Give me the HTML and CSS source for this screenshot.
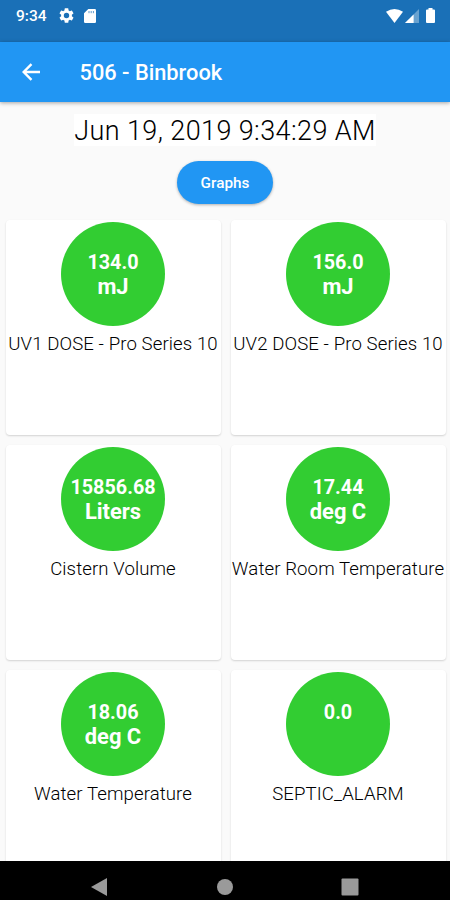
FILE: index.html
```html
<!DOCTYPE html>
<html lang="en">
<head>
<meta charset="utf-8">
<title>506 - Binbrook</title>
<link rel="stylesheet" href="styles.css">
</head>
<body>
<div class="screen">
  <header class="status">
    <span class="clock">9:34</span>
    <svg class="gear" viewBox="2 2 20 20"><path d="M19.14 12.94c.04-.3.06-.61.06-.94s-.02-.64-.07-.94l2.03-1.58a.49.49 0 0 0 .12-.61l-1.92-3.32a.49.49 0 0 0-.59-.22l-2.39.96a7 7 0 0 0-1.62-.94l-.36-2.54a.48.48 0 0 0-.48-.41h-3.84a.48.48 0 0 0-.47.41l-.36 2.54a7.3 7.3 0 0 0-1.62.94l-2.39-.96a.48.48 0 0 0-.59.22L2.74 8.87a.48.48 0 0 0 .12.61l2.03 1.58a6 6 0 0 0 0 1.88l-2.03 1.58a.49.49 0 0 0-.12.61l1.92 3.32c.12.22.37.29.59.22l2.39-.96c.5.38 1.03.7 1.62.94l.36 2.54c.05.24.24.41.48.41h3.84c.24 0 .44-.17.47-.41l.36-2.54a7.3 7.3 0 0 0 1.62-.94l2.39.96c.22.08.47 0 .59-.22l1.92-3.32a.48.48 0 0 0-.12-.61zM12 15.6a3.6 3.6 0 1 1 0-7.2 3.6 3.6 0 0 1 0 7.2z"/></svg>
    <svg class="sd" viewBox="0 0 12 14"><path d="M4.3 0H10.8Q12 0 12 1.200V12.800Q12 14 10.800 14H1.200Q0 14 0 12.800V4.300Z"/><path class="slots" d="M5 2v2.200M7.200 2v2.200M9.400 2v2.200"/></svg>
    <svg class="wifi" viewBox="0 0 17 14"><path d="M0 2.700Q8.500-2.700 17 2.700L8.500 14Z"/></svg>
    <svg class="signal" viewBox="0 0 14 14"><path class="faint" d="M14 0V14H0Z"/><path d="M8.600 5.400V14H0Z"/></svg>
    <svg class="battery" viewBox="0 0 9 15"><path d="M2.500 0h4v1.500H8Q9 1.500 9 2.500V14Q9 15 8 15H1Q0 15 0 14V2.500Q0 1.500 1 1.500H2.500Z"/></svg>
  </header>
  <nav class="appbar">
    <svg class="back" viewBox="0 0 18 18"><path d="M18 9H1.500M9.500 1.200L1.700 9L9.500 16.800"/></svg>
    <h1>506 - Binbrook</h1>
  </nav>
  <main class="content">
    <div class="date">Jun 19, 2019 9:34:29 AM</div>
    <button class="graphs">Graphs</button>
    <div class="grid">
      <section class="card"><div class="dial"><span>134.0</span><span class="unit">mJ</span></div><p>UV1 DOSE - Pro Series 10</p></section>
      <section class="card"><div class="dial"><span>156.0</span><span class="unit">mJ</span></div><p>UV2 DOSE - Pro Series 10</p></section>
      <section class="card"><div class="dial"><span>15856.68</span><span class="unit">Liters</span></div><p>Cistern Volume</p></section>
      <section class="card"><div class="dial"><span>17.44</span><span class="unit">deg C</span></div><p>Water Room Temperature</p></section>
      <section class="card"><div class="dial"><span>18.06</span><span class="unit">deg C</span></div><p>Water Temperature</p></section>
      <section class="card"><div class="dial"><span>0.0</span></div><p>SEPTIC_ALARM</p></section>
    </div>
  </main>
  <footer class="navbar">
    <svg viewBox="0 0 16 18"><path d="M16 0V18L0 9Z"/></svg>
    <svg class="home" viewBox="0 0 16 18"><circle cx="8" cy="9" r="8"/></svg>
    <svg viewBox="0 0 18 18"><rect width="17" height="17" x=".5" y=".5" rx="1"/></svg>
  </footer>
</div>
</body>
</html>
```
FILE: styles.css
```css
* { box-sizing: border-box; }
body { margin: 0; font-family: Roboto, sans-serif; }
.screen { width: 450px; height: 900px; display: flex; flex-direction: column; overflow: hidden; background: #fafafa; }
.status { flex: 0 0 41.5px; display: flex; align-items: center; padding: 0 15px 10.5px 16px; background: #1a70b7; color: #fff; }
.status svg { fill: #fff; }
.clock { font-size: 15.5px; line-height: 19px; font-weight: 500; width: 42.5px; padding-top: 1px; }
.gear { width: 15px; height: 15px; }
.sd { width: 12px; height: 14px; margin-left: 10px; }
.sd .slots { stroke: #1a70b7; stroke-width: .7; }
.wifi { width: 17px; height: 14px; margin-left: auto; }
.signal { width: 14px; height: 14px; margin-left: 2px; }
.signal .faint { opacity: .35; }
.battery { width: 9px; height: 15px; margin-left: 7.5px; }
.appbar { flex: 0 0 60.5px; display: flex; align-items: center; padding: 1px 0 0 22px; background: #2196f3; color: #fff; z-index: 1; box-shadow: 0 1px 4px rgba(0,0,0,.35); }
.back { width: 18px; height: 18px; fill: none; stroke: #fff; stroke-width: 2.400; }
h1 { margin: 2px 0 0 39.5px; font-size: 21.8px; font-weight: 500; line-height: 26px; }
.content { flex: 1; min-height: 0; overflow: hidden; display: flex; flex-direction: column; align-items: center; padding-top: 12px; }
.date { height: 32px; line-height: 34px; background: #fff; font-size: 27px; font-weight: 300; color: #000; letter-spacing: .4px; white-space: nowrap; }
.graphs { flex: none; width: 96px; height: 43px; margin-top: 15px; padding: 1px 0 0; border: 0; border-radius: 22px; background: #2196f3; color: #fff; font: 500 15.300px/42px Roboto, sans-serif; box-shadow: 0 1px 3px rgba(0,0,0,.3); }
.grid { flex: none; width: 450px; margin-top: 16px; padding-left: 5.500px; display: grid; grid-template-columns: 215px 215px; column-gap: 10px; grid-auto-rows: 215px; row-gap: 10px; }
.card { display: flex; flex-direction: column; align-items: center; padding-top: 2px; background: #fff; border-radius: 4px; box-shadow: 0 1px 2px rgba(0,0,0,.16); }
.dial { width: 104px; height: 104px; flex: none; padding-top: 29px; border-radius: 50%; background: #32cd32; color: #fff; display: flex; flex-direction: column; align-items: center; font-size: 19.8px; font-weight: 700; line-height: 24px; }
.dial .unit { font-size: 21.9px; line-height: 24px; }
.card p { margin: 7px 0 0; font-size: 18.600px; line-height: 23px; font-weight: 300; color: #000; letter-spacing: .1px; white-space: nowrap; }
.navbar { flex: 0 0 39px; display: flex; align-items: center; justify-content: space-between; padding: 12px 91px 0 91px; background: #000; z-index: 1; }
.navbar svg { height: 18px; fill: #9a9a9a; }
.navbar .home { margin-left: 2px; }
```
